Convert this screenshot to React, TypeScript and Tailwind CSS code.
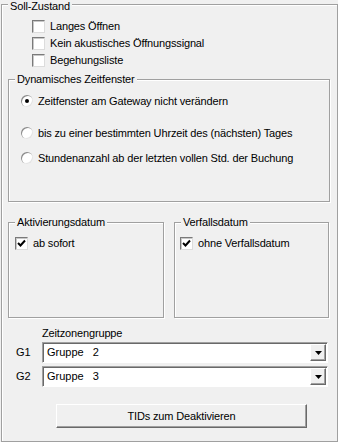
import React from 'react'

const font = { fontFamily: '"Liberation Sans", Arial, sans-serif' }

function CheckBox({ checked, label }: { checked?: boolean; label: string }) {
  return (
    <div className="flex items-center h-[17px]">
      <span className="w-[13px] h-[13px] border border-t-[#7a7a7a] border-l-[#7a7a7a] border-b-[#dcdcdc] border-r-[#dcdcdc] bg-white flex items-center justify-center shadow-[inset_1px_1px_0_#c8c8c8]">
        {checked && (
          <svg width="9" height="9" viewBox="0 0 9 9">
            <path d="M1 4 L3.5 6.5 L8 1.5" stroke="#000" strokeWidth="2" fill="none" />
          </svg>
        )}
      </span>
      <span className="ml-[5px] text-[11px] tracking-[-0.15px] text-black leading-none">{label}</span>
    </div>
  )
}

function Radio({ checked, label }: { checked?: boolean; label: string }) {
  return (
    <div className="flex items-center h-[14px]">
      <span className="w-[12px] h-[12px] rounded-full bg-white flex items-center justify-center shadow-[inset_1px_1px_0_#8a8a8a,inset_-1px_-1px_0_#e4e4e4]">
        {checked && <span className="w-[4px] h-[4px] rounded-full bg-black" />}
      </span>
      <span className="ml-[5px] text-[11px] tracking-[-0.15px] text-black leading-none">{label}</span>
    </div>
  )
}

function Group({ title, className, top = '-top-[8px]', children }: { title: string; className: string; top?: string; children?: React.ReactNode }) {
  return (
    <div className={`relative border border-[#a0a0a0] shadow-[inset_1px_1px_0_#fff,1px_1px_0_#fff] ${className}`}>
      <span className={`absolute ${top} left-[6px] px-[2px] bg-[#f0f0f0] text-[11px] tracking-[-0.15px] leading-[14px] text-black`}>{title}</span>
      {children}
    </div>
  )
}

function Combo({ value }: { value: string }) {
  return (
    <div className="w-[286px] h-[21px] border border-t-[#a0a0a0] border-l-[#a0a0a0] border-b-white border-r-white shadow-[inset_1px_1px_0_#696969] bg-white flex items-center">
      <span className="ml-[4px] text-[11px] text-black whitespace-pre flex-1">{value}</span>
      <span className="w-[16px] h-[17px] mr-[1px] bg-[#f0f0f0] border border-t-white border-l-white border-b-[#696969] border-r-[#696969] shadow-[inset_-1px_-1px_0_#a0a0a0] flex items-center justify-center">
        <svg width="7" height="4" viewBox="0 0 7 4">
          <path d="M0 0 H7 L3.5 4 Z" fill="#000" />
        </svg>
      </span>
    </div>
  )
}

export default function App() {
  return (
    <div className="w-[338px] h-[442px] bg-[#f0f0f0] pt-[4px] overflow-hidden" style={font}>
      <Group title="Soll-Zustand" top="-top-[6px]" className="ml-[1px] w-[337px] h-[438px]">
        <div className="pt-[13px] pl-[30px]">
          <CheckBox label="Langes Öffnen" />
          <CheckBox label="Kein akustisches Öffnungssignal" />
          <CheckBox label="Begehungsliste" />
        </div>

        <Group title="Dynamisches Zeitfenster" className="mt-[10px] ml-[6px] w-[322px] h-[123px]">
          <div className="pt-[14px] pl-[12px]">
            <Radio checked label="Zeitfenster am Gateway nicht verändern" />
            <div className="mt-[18px]">
              <Radio label="bis zu einer bestimmten Uhrzeit des (nächsten) Tages" />
            </div>
            <div className="mt-[11px]">
              <Radio label="Stundenanzahl ab der letzten vollen Std. der Buchung" />
            </div>
          </div>
        </Group>

        <div className="mt-[20px] ml-[6px] flex gap-[10px]">
          <Group title="Aktivierungsdatum" className="w-[156px] h-[96px]">
            <div className="pt-[12px] pl-[6px]">
              <CheckBox checked label="ab sofort" />
            </div>
          </Group>
          <Group title="Verfallsdatum" className="w-[155px] h-[96px]">
            <div className="pt-[12px] pl-[5px]">
              <CheckBox checked label="ohne Verfallsdatum" />
            </div>
          </Group>
        </div>

        <div className="mt-[9px] ml-[40px] text-[11px] tracking-[-0.15px] leading-[13px] text-black">Zeitzonengruppe</div>

        <div className="mt-[2px] flex items-center">
          <span className="w-[40px] pl-[14px] text-[11px] text-black">G1</span>
          <Combo value="Gruppe   2" />
        </div>
        <div className="mt-[3px] flex items-center">
          <span className="w-[40px] pl-[14px] text-[11px] text-black">G2</span>
          <Combo value="Gruppe   3" />
        </div>

        <button className="mt-[17px] ml-[54px] w-[251px] h-[24px] bg-[#f0f0f0] border border-t-white border-l-white border-b-[#696969] border-r-[#696969] shadow-[inset_-1px_-1px_0_#a0a0a0] text-[11px] tracking-[-0.15px] text-black">
          TIDs zum Deaktivieren
        </button>
      </Group>
    </div>
  )
}
